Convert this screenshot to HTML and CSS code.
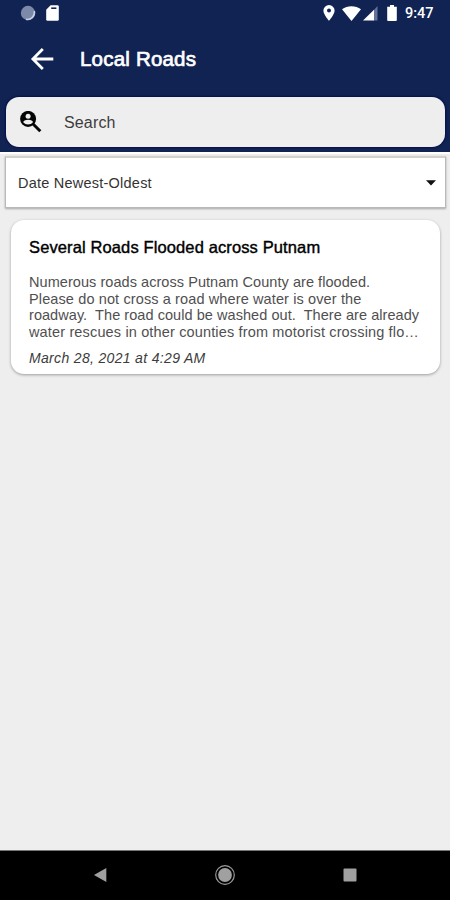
FILE: index.html
```html
<!DOCTYPE html>
<html lang="en">
<head>
  <meta charset="UTF-8" />
  <meta name="viewport" content="width=device-width, initial-scale=1" />
  <title>Local Roads</title>
  <link rel="stylesheet" href="styles.css">
</head>

<body>
  <header>
    <!-- Status bar -->
    <div class="status-bar">
      <svg class="icon-sync" width="16" height="16" viewBox="0 0 16 16">
        <circle cx="8" cy="8" r="7.200" fill="#7c89a8" />
        <path d="M14.300 6A7 7 0 0 1 6 14.300" fill="none" stroke="#c9d2e4" stroke-width="1.600" />
      </svg>
      <svg class="icon-card" width="13" height="16" viewBox="0 0 13 16">
        <path d="M4.600 .2H11.400Q12.800 .2 12.800 1.600V14.400Q12.800 15.800 11.400 15.800H1.600Q.2 15.800 .2 14.400V4.800Z" fill="#fff" />
        <path d="M5.200 3.200H10.400" stroke="#112353" stroke-width="1.600" />
      </svg>
      <div class="status-right">
        <svg width="12" height="16" viewBox="0 0 12 16">
          <path d="M6 0a5.600 5.600 0 0 0-5.600 5.600C.4 9.800 6 15.800 6 15.800s5.600-6 5.600-10.200A5.600 5.600 0 0 0 6 0Zm0 7.600a2 2 0 1 1 0-4 2 2 0 0 1 0 4Z" fill="#fff" />
        </svg>
        <svg class="icon-wifi" width="19" height="15" viewBox="0 0 19 15">
          <path d="M9.500 15L0 3.300C5.400-.9 13.600-.9 19 3.300Z" fill="#fff" />
        </svg>
        <svg class="icon-signal" width="15" height="15" viewBox="0 0 15 15">
          <path d="M14.500 0V14.500H10.500V4.400Z" fill="#65729a" />
          <path d="M0 14.500L11 3.800V14.500Z" fill="#fff" />
        </svg>
        <svg class="icon-battery" width="10" height="16" viewBox="0 0 10 16">
          <path d="M3 0H7V1.700H9.800V15Q9.800 15.900 8.900 15.900H1.100Q.2 15.900 .2 15V1.700H3Z" fill="#fff" />
        </svg>
        <span class="clock">9:47</span>
      </div>
    </div>

    <div class="title-bar">
      <svg width="24" height="24" viewBox="0 0 24 24" fill="none" stroke="#fff" stroke-width="2.800">
        <path d="M23.300 12H3M12.800 1.900L2.900 12L12.800 22.100" />
      </svg>
      <h1>Local Roads</h1>
    </div>

    <div class="search">
      <svg width="22" height="22" viewBox="0 0 22 22">
        <circle cx="8.100" cy="7.900" r="8" fill="#050505" />
        <circle cx="8.100" cy="5.200" r="2.500" fill="#eee" />
        <path d="M3.200 11.300Q3.600 8.800 8.100 8.800Q12.600 8.800 13 11.300Q11.200 13.500 8.100 13.500Q5 13.500 3.200 11.300Z" fill="#eee" />
        <path d="M12.800 12.800L20.300 20.300" stroke="#050505" stroke-width="3" />
      </svg>
      <span>Search</span>
    </div>
  </header>

  <main>
    <div class="sort">
      <span>Date Newest-Oldest</span>
      <svg width="10" height="6" viewBox="0 0 10 6"><path d="M0 .3H10L5 5.500Z" fill="#111" /></svg>
    </div>

    <article class="card">
      <h2>Several Roads Flooded across Putnam</h2>
      <p class="summary">
        <span class="l1">Numerous roads across Putnam County are flooded.</span>
        <span class="l2">Please do not cross a road where water is over the</span>
        <span class="l3">roadway.&nbsp; The road could be washed out.&nbsp; There are already</span>
        <span class="l4">water rescues in other counties from motorist crossing flo…</span>
      </p>
      <p class="date">March 28, 2021 at 4:29 AM</p>
    </article>
  </main>

  <!-- System navigation -->
  <nav>
    <svg width="14" height="16" viewBox="0 0 14 16"><path d="M13.300 1V15L1 8Z" fill="#a0a0a0" /></svg>
    <svg width="22" height="22" viewBox="0 0 22 22">
      <circle cx="11" cy="11" r="9.300" fill="none" stroke="#999" stroke-width="1.200" />
      <circle cx="11" cy="11" r="6.900" fill="#a0a0a0" />
    </svg>
    <svg width="14" height="14" viewBox="0 0 14 14"><rect x=".5" y=".5" width="13" height="13" rx="1" fill="#a0a0a0" /></svg>
  </nav>
</body>
</html>
```
FILE: styles.css
```css
/* Base styles */
* {
  box-sizing: border-box;
}

body {
  margin: 0;
  height: 900px;
  display: flex;
  flex-direction: column;
  font-family: "Liberation Sans", Arial, sans-serif;
  background: #eee;
  color: #333;
  overflow: hidden;
}

h1, h2, p {
  margin: 0;
  font-weight: 400;
  white-space: nowrap;
}

svg {
  display: block;
  flex: none;
}

/* Header */
header {
  height: 152px;
  background: #112353;
  color: #fff;
}

.status-bar {
  height: 28px;
  padding: 0 16px 2px 20px;
  display: flex;
  align-items: center;
}

.icon-card {
  margin-left: 10px;
}

.status-right {
  display: flex;
  align-items: center;
  margin-left: auto;
}

.icon-wifi {
  margin-left: 7px;
}

.icon-signal {
  margin-left: 2px;
}

.icon-battery {
  margin-left: 9px;
}

.clock {
  margin-left: 8px;
  width: 29px;
  font: 500 14.500px Roboto, sans-serif;
}

.title-bar {
  height: 62px;
  padding-left: 30px;
  display: flex;
  align-items: center;
}

.title-bar h1 {
  margin-left: 26px;
  font-size: 20.500px;
  letter-spacing: 0.2px;
  -webkit-text-stroke: 0.7px #fff;
}

.search {
  height: 50px;
  margin: 7px 5px 0 6px;
  padding-left: 14px;
  display: flex;
  align-items: center;
  border-radius: 13px;
  background: #eee;
  color: #3c3c3c;
  font-size: 16px;
  letter-spacing: 0.15px;
  box-shadow: 0 0 2px 1px #04104a;
}

.search span {
  margin-left: 22px;
  padding-top: 2px;
}

/* Sort dropdown */
main {
  flex: 1;
  border-top: 2px solid #fff;
}

.sort {
  height: 52px;
  margin: 2px 4px 0 5px;
  padding: 0 9px 0 12px;
  display: flex;
  align-items: center;
  justify-content: space-between;
  background: #fff;
  border: 1px solid #b9b9b9;
  border-top: 2px solid #d2d2cc;
  box-shadow: 0 1px 2px rgba(0, 0, 0, 0.3);
  font-size: 14.500px;
  letter-spacing: 0.23px;
}

/* Report card */
.card {
  height: 154px;
  margin: 12px 10px 0 11px;
  padding: 17px 0 0 18px;
  border-radius: 13px;
  background: #fff;
  box-shadow: 0 1px 3px rgba(0, 0, 0, 0.35);
}

.card h2 {
  font-size: 16.500px;
  line-height: 20px;
  letter-spacing: 0.12px;
  color: #000;
  -webkit-text-stroke: 0.4px #000;
}

.summary {
  margin-top: 17px;
  font-size: 14.500px;
  line-height: 16.700px;
  color: #505050;
}

.summary span {
  display: block;
}

.summary .l1,
.summary .l3 {
  letter-spacing: 0.055px;
}

.summary .l2 {
  letter-spacing: 0.12px;
}

.summary .l4 {
  letter-spacing: 0.15px;
}

.date {
  margin-top: 8px;
  font-size: 14px;
  line-height: 18px;
  letter-spacing: 0.33px;
  font-style: italic;
  color: #3c3c3c;
}

/* Navigation bar */
nav {
  height: 50px;
  padding: 0 93px 2px;
  display: flex;
  align-items: center;
  justify-content: space-between;
  background: #000;
  border-top: 1px solid #777;
}
```
